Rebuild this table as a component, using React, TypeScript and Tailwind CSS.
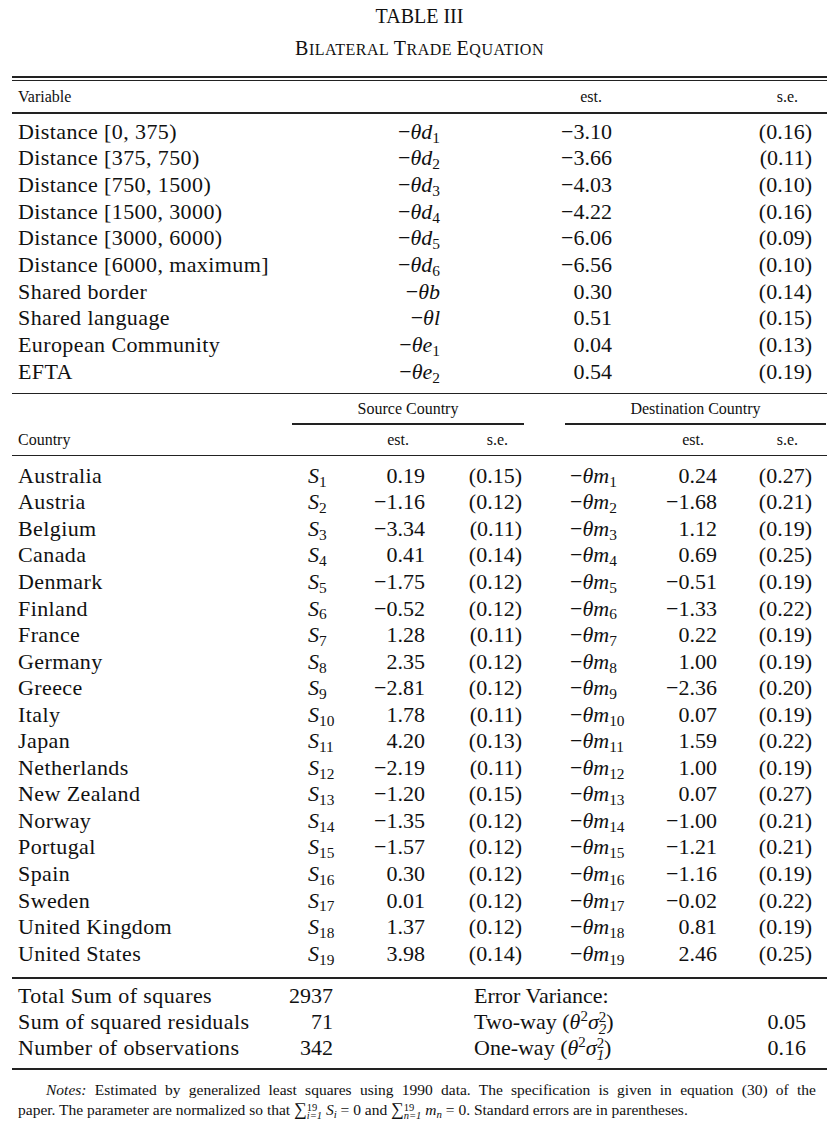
import type { ReactNode } from 'react';

type TopRow = { label: string; sym: string; sub?: string; est: string; se: string };
type CountryRow = { name: string; s: string; sSe: string; m: string; mSe: string };

const topRows: TopRow[] = [
  { label: 'Distance [0, 375)', sym: 'd', sub: '1', est: '−3.10', se: '(0.16)' },
  { label: 'Distance [375, 750)', sym: 'd', sub: '2', est: '−3.66', se: '(0.11)' },
  { label: 'Distance [750, 1500)', sym: 'd', sub: '3', est: '−4.03', se: '(0.10)' },
  { label: 'Distance [1500, 3000)', sym: 'd', sub: '4', est: '−4.22', se: '(0.16)' },
  { label: 'Distance [3000, 6000)', sym: 'd', sub: '5', est: '−6.06', se: '(0.09)' },
  { label: 'Distance [6000, maximum]', sym: 'd', sub: '6', est: '−6.56', se: '(0.10)' },
  { label: 'Shared border', sym: 'b', est: '0.30', se: '(0.14)' },
  { label: 'Shared language', sym: 'l', est: '0.51', se: '(0.15)' },
  { label: 'European Community', sym: 'e', sub: '1', est: '0.04', se: '(0.13)' },
  { label: 'EFTA', sym: 'e', sub: '2', est: '0.54', se: '(0.19)' },
];

const countries: CountryRow[] = [
  { name: 'Australia', s: '0.19', sSe: '(0.15)', m: '0.24', mSe: '(0.27)' },
  { name: 'Austria', s: '−1.16', sSe: '(0.12)', m: '−1.68', mSe: '(0.21)' },
  { name: 'Belgium', s: '−3.34', sSe: '(0.11)', m: '1.12', mSe: '(0.19)' },
  { name: 'Canada', s: '0.41', sSe: '(0.14)', m: '0.69', mSe: '(0.25)' },
  { name: 'Denmark', s: '−1.75', sSe: '(0.12)', m: '−0.51', mSe: '(0.19)' },
  { name: 'Finland', s: '−0.52', sSe: '(0.12)', m: '−1.33', mSe: '(0.22)' },
  { name: 'France', s: '1.28', sSe: '(0.11)', m: '0.22', mSe: '(0.19)' },
  { name: 'Germany', s: '2.35', sSe: '(0.12)', m: '1.00', mSe: '(0.19)' },
  { name: 'Greece', s: '−2.81', sSe: '(0.12)', m: '−2.36', mSe: '(0.20)' },
  { name: 'Italy', s: '1.78', sSe: '(0.11)', m: '0.07', mSe: '(0.19)' },
  { name: 'Japan', s: '4.20', sSe: '(0.13)', m: '1.59', mSe: '(0.22)' },
  { name: 'Netherlands', s: '−2.19', sSe: '(0.11)', m: '1.00', mSe: '(0.19)' },
  { name: 'New Zealand', s: '−1.20', sSe: '(0.15)', m: '0.07', mSe: '(0.27)' },
  { name: 'Norway', s: '−1.35', sSe: '(0.12)', m: '−1.00', mSe: '(0.21)' },
  { name: 'Portugal', s: '−1.57', sSe: '(0.12)', m: '−1.21', mSe: '(0.21)' },
  { name: 'Spain', s: '0.30', sSe: '(0.12)', m: '−1.16', mSe: '(0.19)' },
  { name: 'Sweden', s: '0.01', sSe: '(0.12)', m: '−0.02', mSe: '(0.22)' },
  { name: 'United Kingdom', s: '1.37', sSe: '(0.12)', m: '0.81', mSe: '(0.19)' },
  { name: 'United States', s: '3.98', sSe: '(0.14)', m: '2.46', mSe: '(0.25)' },
];

function Rule() {
  return <div className="h-[1.5px] bg-[#222]" />;
}

// superscript stacked over subscript (σ₂², ∑ limits). Fixed small height so the row keeps its line box.
function Stack({ sup, sub }: { sup: ReactNode; sub: ReactNode }) {
  return (
    <span className="inline-flex h-[0.9em] flex-col align-[0.45em] text-[0.68em] leading-[0.8] not-italic">
      <span>{sup}</span>
      <span className="italic">{sub}</span>
    </span>
  );
}

function Theta({ sym, sub }: { sym: string; sub?: string }) {
  return (
    <span>
      −<i>θ{sym}</i>
      {sub && <sub className="text-[0.7em]">{sub}</sub>}
    </span>
  );
}

function SmallCaps({ text }: { text: string }) {
  return (
    <span className="tracking-[0.5px]">
      {text.split(' ').map((w, i) => (
        <span key={i}>
          {i > 0 && ' '}
          <span className="text-[20px]">{w[0]}</span>
          <span className="text-[16px]">{w.slice(1).toUpperCase()}</span>
        </span>
      ))}
    </span>
  );
}

export default function App() {
  return (
    <div className="min-h-[1132px] w-full bg-white font-['Liberation_Serif','Times_New_Roman',serif] text-[#111]">
      <div className="flex h-[32px] items-center justify-center text-[20px]">TABLE III</div>
      <div className="flex h-[32px] items-center justify-center">
        <SmallCaps text="Bilateral Trade Equation" />
      </div>

      <div className="mx-[12px] mt-[12px]">
        <Rule />
        <div className="mt-[2px]">
          <Rule />
        </div>

        <div className="grid h-[31px] grid-cols-[312px_110px_172px_200px] items-center pl-[6px] pr-[14px] text-[16px]">
          <span>Variable</span>
          <span />
          <span className="pr-[10px] text-right">est.</span>
          <span className="pr-[14px] text-right">s.e.</span>
        </div>
        <Rule />

        <div className="pb-[7.5px] pl-[6px] pr-[14px] pt-[5px] text-[22px]">
          {topRows.map((r) => (
            <div key={r.label} className="grid h-[26.67px] grid-cols-[312px_110px_172px_200px] items-center leading-none">
              <span className="tracking-[0.4px]">{r.label}</span>
              <span className="text-right">
                <Theta sym={r.sym} sub={r.sub} />
              </span>
              <span className="text-right">{r.est}</span>
              <span className="text-right">{r.se}</span>
            </div>
          ))}
        </div>
        <Rule />

        <div className="flex h-[29px] items-center text-[16px]">
          <div className="w-[280px]" />
          <div className="w-[232px] text-center">Source Country</div>
          <div className="w-[41px]" />
          <div className="w-[261px] text-center">Destination Country</div>
        </div>
        <div className="flex">
          <div className="w-[280px]" />
          <div className="w-[232px]">
            <Rule />
          </div>
          <div className="w-[41px]" />
          <div className="w-[261px]">
            <Rule />
          </div>
        </div>
        <div className="grid h-[30px] grid-cols-[282px_60px_65px_97px_128px_67px_95px] items-center pl-[6px] pr-[14px] text-[16px]">
          <span>Country</span>
          <span />
          <span className="pr-[16px] text-right">est.</span>
          <span className="pr-[14px] text-right">s.e.</span>
          <span />
          <span className="pr-[13px] text-right">est.</span>
          <span className="pr-[14px] text-right">s.e.</span>
        </div>
        <Rule />

        <div className="pb-[10.5px] pl-[6px] pr-[14px] pt-[6.5px] text-[22px]">
          {countries.map((c, i) => (
            <div
              key={c.name}
              className="grid h-[26.56px] grid-cols-[282px_60px_65px_97px_128px_67px_95px] items-center leading-none"
            >
              <span className="tracking-[0.4px]">{c.name}</span>
              <span className="pl-[8px]">
                <i>S</i>
                <sub className="text-[0.7em]">{i + 1}</sub>
              </span>
              <span className="text-right">{c.s}</span>
              <span className="text-right">{c.sSe}</span>
              <span className="pl-[48px]">
                <Theta sym="m" sub={String(i + 1)} />
              </span>
              <span className="text-right">{c.m}</span>
              <span className="text-right">{c.mSe}</span>
            </div>
          ))}
        </div>
        <Rule />

        <div className="pb-[7.5px] pl-[6px] pr-[14px] pt-[4px] text-[22px]">
          <div className="grid h-[26px] grid-cols-[250px_65px_367px_106px] items-center leading-none">
            <span className="tracking-[0.4px]">Total Sum of squares</span>
            <span className="text-right">2937</span>
            <span className="pl-[141px]">Error Variance:</span>
            <span />
          </div>
          <div className="grid h-[26px] grid-cols-[250px_65px_367px_106px] items-center leading-none">
            <span className="tracking-[0.4px]">Sum of squared residuals</span>
            <span className="text-right">71</span>
            <span className="pl-[141px]">
              Two-way (<i>θ</i>
              <sup className="text-[0.68em]">2</sup>
              <i>σ</i>
              <Stack sup="2" sub="2" />)
            </span>
            <span className="text-right">0.05</span>
          </div>
          <div className="grid h-[26px] grid-cols-[250px_65px_367px_106px] items-center leading-none">
            <span className="tracking-[0.4px]">Number of observations</span>
            <span className="text-right">342</span>
            <span className="pl-[141px]">
              One-way (<i>θ</i>
              <sup className="text-[0.68em]">2</sup>
              <i>σ</i>
              <Stack sup="2" sub="1" />)
            </span>
            <span className="text-right">0.16</span>
          </div>
        </div>
        <Rule />

        <div className="mt-[10.5px] pl-[6px] pr-[11px] text-[15.5px] leading-[20px]">
          <div className="pl-[28px] text-justify [text-align-last:justify]">
            <i>Notes:</i> Estimated by generalized least squares using 1990 data. The specification is given in equation
            (30) of the
          </div>
          <div className="whitespace-nowrap">
            paper. The parameter are normalized so that <span className="text-[1.15em] leading-none">∑</span>
            <Stack sup="19" sub="i=1" /> <i>S</i>
            <sub className="text-[0.7em] italic">i</sub> = 0 and <span className="text-[1.15em] leading-none">∑</span>
            <Stack sup="19" sub="n=1" /> <i>m</i>
            <sub className="text-[0.7em] italic">n</sub> = 0. Standard errors are in parentheses.
          </div>
        </div>
      </div>
    </div>
  );
}
